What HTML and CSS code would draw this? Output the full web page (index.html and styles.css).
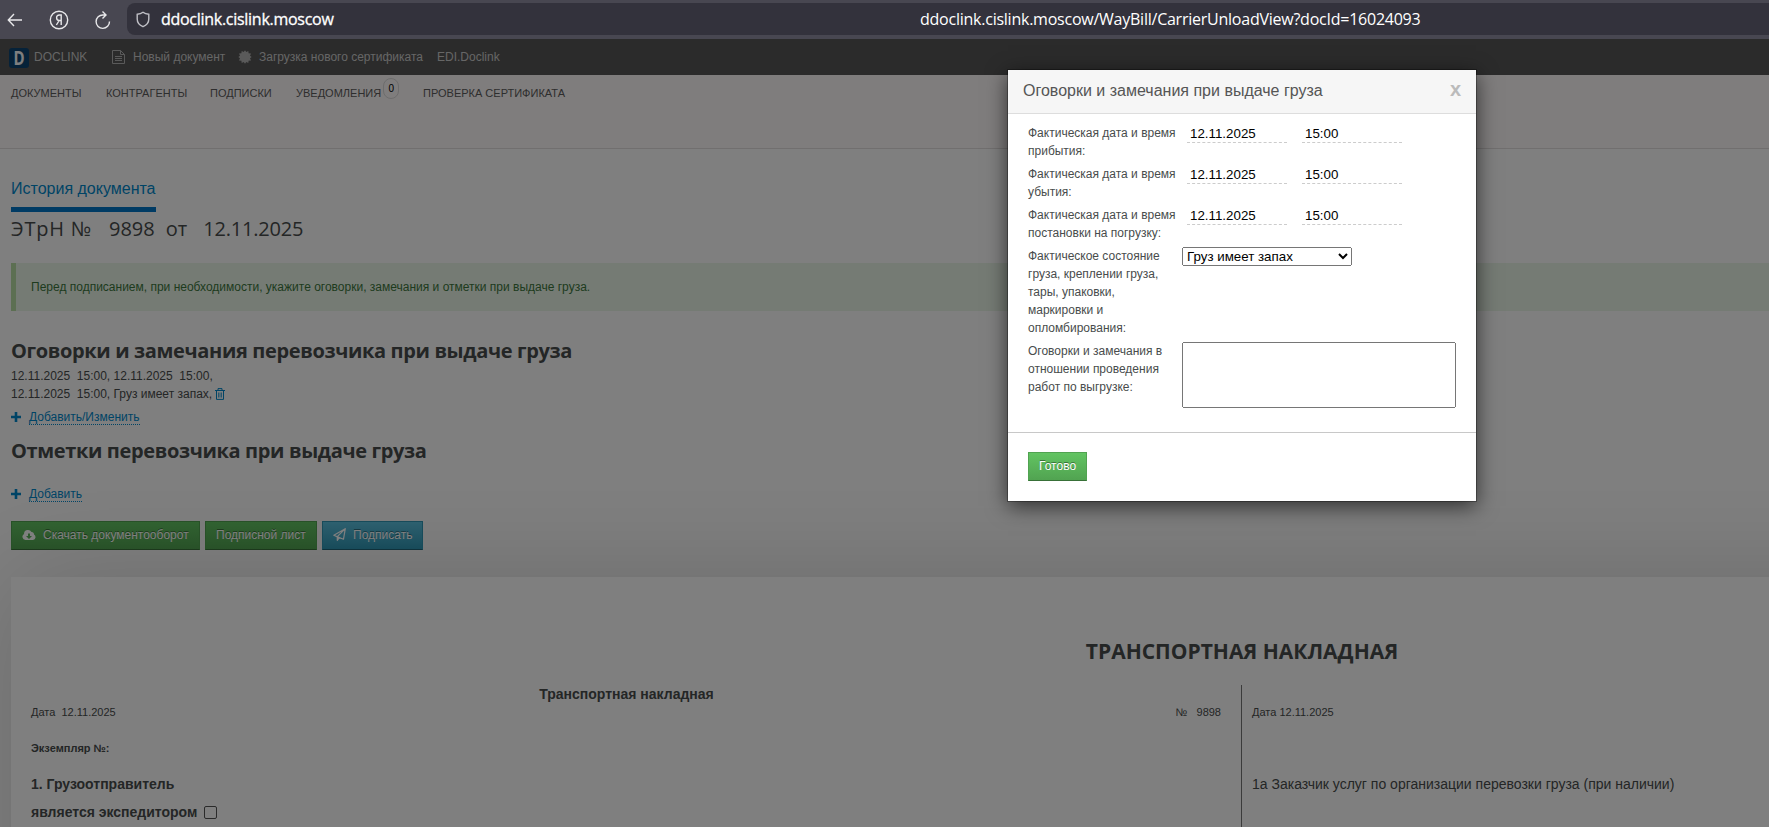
FILE: index.html
```html
<!DOCTYPE html>
<html lang="ru">

<head>
  <meta charset="UTF-8">
  <title>Doclink</title>
  <link rel="stylesheet" href="styles.css">
</head>

<body>
  <div class="browser">
    <svg class="b-icon back" width="16" height="16" viewBox="0 0 16 16"><path d="M15 8H1.5M7 2L1.3 8L7 14"/></svg>
    <svg class="b-icon ya" width="20" height="20" viewBox="0 0 20 20"><circle cx="10" cy="10" r="8.700"/><path d="M12.200 15V5H10.400C8.600 5 7.600 6.200 7.600 7.800C7.600 9.500 8.600 10.500 10.200 10.500H12.200M10.200 10.500L7.400 15"/></svg>
    <svg class="b-icon reload" width="18" height="20" viewBox="0 0 18 20"><path d="M15.500 11.500A6.700 6.700 0 1 1 9 5H11.500M8.500 1.500L12 5L8.500 8.500"/></svg>
    <div class="address">
      <svg class="b-icon shield" width="14" height="17" viewBox="0 0 14 17"><path d="M7 1.300C8.600 2.600 10.500 3.200 12.800 3.300V8C12.800 11.500 10.500 14.200 7 15.700C3.500 14.200 1.200 11.500 1.200 8V3.300C3.500 3.200 5.400 2.600 7 1.300Z"/></svg>
      <span class="host">ddoclink.cislink.moscow</span>
      <span class="url">ddoclink.cislink.moscow/WayBill/CarrierUnloadView?docId=16024093</span>
    </div>
  </div>

  <div class="app">
    <div class="topbar">
      <span class="logo"><span>D</span></span>
      <a class="brand">DOCLINK</a>
      <svg class="t-icon" width="13" height="14" viewBox="0 0 13 14"><path d="M.5.5H8.500L12.500 4.500V13.500H.5ZM8.500.5V4.500H12.500M3 6.500H10M3 8.500H10M3 10.500H10" fill="none" stroke="#b4b4b4"/></svg>
      <a class="t-new">Новый документ</a>
      <svg class="t-icon burst" width="14" height="14" viewBox="0 0 14 14"><path d="M7 .3L8.300 2L10.300 1L10.600 3.300L13 3.600L12 5.700L13.700 7L12 8.300L13 10.400L10.600 10.700L10.300 13L8.300 12L7 13.700L5.700 12L3.700 13L3.400 10.700L1 10.400L2 8.300L.3 7L2 5.700L1 3.600L3.400 3.300L3.700 1L5.700 2Z" fill="#b4b4b4"/></svg>
      <a class="t-cert">Загрузка нового сертификата</a>
      <a class="t-edi">EDI.Doclink</a>
    </div>

    <div class="nav">
      <a class="n-docs">ДОКУМЕНТЫ</a>
      <a class="n-agents">КОНТРАГЕНТЫ</a>
      <a class="n-sign">ПОДПИСКИ</a>
      <a class="n-notes">УВЕДОМЛЕНИЯ<span class="badge">0</span></a>
      <a class="n-check">ПРОВЕРКА СЕРТИФИКАТА</a>
    </div>

    <div class="content">
      <a class="history"><span>История документа</span></a>
      <div class="doc-title"><span class="type">ЭТрН №</span><span class="num">9898</span><span class="from">от</span><span class="date">12.11.2025</span></div>
      <div class="alert"><span>Перед подписанием, при необходимости, укажите оговорки, замечания и отметки при выдаче груза.</span></div>

      <h3 class="remarks-title"><span>Оговорки и замечания перевозчика при выдаче груза</span></h3>
      <div class="remarks">
        12.11.2025 &nbsp;15:00, 12.11.2025 &nbsp;15:00,<br>
        12.11.2025 &nbsp;15:00, Груз имеет запах,
        <svg class="trash" width="10" height="12" viewBox="0 0 10 12"><path d="M0 2.500H10M3 2.300V.6H7V2.300M1.500 2.500V11.400H8.500V2.500" fill="none" stroke="#08c"/><path d="M3.500 4.500V9.500M5 4.500V9.500M6.500 4.500V9.500" stroke="#08c" stroke-width=".7"/></svg>
      </div>
      <div class="add">
        <svg width="10" height="10" viewBox="0 0 10 10"><path d="M5 0V10M0 5H10" stroke="#08c" stroke-width="2.600"/></svg>
        <a class="add-edit">Добавить/Изменить</a>
      </div>

      <h3 class="marks-title"><span>Отметки перевозчика при выдаче груза</span></h3>
      <div class="add add-mark">
        <svg width="10" height="10" viewBox="0 0 10 10"><path d="M5 0V10M0 5H10" stroke="#08c" stroke-width="2.600"/></svg>
        <a>Добавить</a>
      </div>

      <div class="buttons">
        <button class="btn download">
          <svg width="14" height="12" viewBox="0 0 14 12"><path fill="#fff" fill-rule="evenodd" d="M3.500 11A3.300 3.300 0 0 1 2 4.900A4 4 0 0 1 9.500 3A2.300 2.300 0 0 1 12 5.600A2.900 2.900 0 0 1 11 11ZM6 4.500V7H4L7 10L10 7H8V4.500Z"/></svg>
          <span>Скачать документооборот</span>
        </button>
        <button class="btn sheet"><span>Подписной лист</span></button>
        <button class="btn btn-info sign">
          <svg width="13" height="13" viewBox="0 0 13 13"><path fill="none" stroke="#fff" stroke-width="1.200" stroke-linejoin="round" d="M12.300.7L.8 7.200L4 8.600L10.500 11.200ZM12.300.7L4.300 8.700V12.300L6.300 9.600"/></svg>
          <span>Подписать</span>
        </button>
      </div>

      <div class="paper">
        <h3 class="paper-title"><span>ТРАНСПОРТНАЯ НАКЛАДНАЯ</span></h3>
        <div class="sheet-grid">
          <div class="left">
            <div class="sub-title"><b>Транспортная накладная</b></div>
            <div class="line small"><span>Дата &nbsp;12.11.2025</span><span class="number">№ &nbsp; 9898</span></div>
            <div class="line small copy"><b>Экземпляр №:</b></div>
            <div class="line sender"><b>1. Грузоотправитель</b></div>
            <div class="line forwarder"><b>является экспедитором</b><span class="check"></span></div>
          </div>
          <div class="right">
            <div class="line small">Дата 12.11.2025</div>
            <div class="line customer">1а Заказчик услуг по организации перевозки груза (при наличии)</div>
          </div>
        </div>
      </div>
    </div>
    <div class="overlay"></div>
  </div>

  <div class="modal">
    <div class="modal-header"><span>Оговорки и замечания при выдаче груза</span><b class="close">x</b></div>
    <div class="modal-body">
      <div class="row">
        <label>Фактическая дата и время прибытия:</label>
        <input class="field" value="12.11.2025"><input class="field time" value="15:00">
      </div>
      <div class="row">
        <label>Фактическая дата и время убытия:</label>
        <input class="field" value="12.11.2025"><input class="field time" value="15:00">
      </div>
      <div class="row">
        <label>Фактическая дата и время постановки на погрузку:</label>
        <input class="field" value="12.11.2025"><input class="field time" value="15:00">
      </div>
      <div class="row">
        <label>Фактическое состояние груза, креплении груза, тары, упаковки, маркировки и опломбирования:</label>
        <select><option>Груз имеет запах</option></select>
      </div>
      <div class="row">
        <label>Оговорки и замечания в отношении проведения работ по выгрузке:</label>
        <textarea></textarea>
      </div>
    </div>
    <div class="modal-footer"><button class="btn">Готово</button></div>
  </div>
</body>

</html>
```
FILE: styles.css
```css
* {
  box-sizing: border-box;
}

body {
  position: relative;
  margin: 0;
  width: 1769px;
  height: 827px;
  overflow: hidden;
  font: 12px/18px "Liberation Sans", Arial, sans-serif;
  color: #484c4c;
}

svg {
  flex: none;
}

span,
a {
  white-space: nowrap;
}

/* browser bar */
.browser {
  display: flex;
  align-items: center;
  height: 39px;
  padding-left: 7px;
  background: #484751;
}

.b-icon {
  fill: none;
  stroke: #e8e8ea;
  stroke-width: 1.4;
}

.ya {
  margin-left: 26px;
}

.reload {
  margin-left: 25px;
}

.address {
  display: flex;
  align-items: center;
  flex: 1;
  height: 32px;
  margin: 0 0 1px 15px;
  padding-left: 9px;
  border-radius: 8px 0 0 8px;
  background: #33323c;
  color: #fff;
  font: 16px/32px "Open Sans", "Noto Sans", sans-serif;
}

.shield {
  stroke: #c0c0c6;
}

.host {
  width: 759px;
  margin-left: 11px;
  letter-spacing: -0.28px;
  -webkit-text-stroke: 0.3px #fff;
}

.url {
  letter-spacing: -0.24px;
}

/* application */
.app {
  position: relative;
  height: 788px;
  overflow: hidden;
  background: #fff;
}

.overlay {
  position: absolute;
  top: 0;
  right: 0;
  bottom: 0;
  left: 0;
  background: rgba(0, 0, 0, 0.5);
}

.topbar {
  display: flex;
  align-items: center;
  height: 36px;
  padding-left: 9px;
  background: #565656;
  color: #ccc;
}

.logo {
  width: 20px;
  height: 20px;
  margin-top: 2px;
  border-radius: 3px;
  background: #0d4473;
  color: #fff;
  font: bold 20px/20px "Open Sans", sans-serif;
  text-align: center;
}

.logo span {
  display: block;
  transform: scaleX(0.75);
}

.brand {
  width: 78px;
  margin-left: 5px;
}

.t-new {
  width: 105px;
  margin-left: 8px;
}

.t-cert {
  width: 178px;
  margin-left: 7px;
}

.nav {
  display: flex;
  height: 74px;
  padding: 9px 0 0 11px;
  border-bottom: 1px solid #e2dede;
  background: #fffafa;
  font-size: 11px;
  color: #5c5c5c;
}

.n-docs {
  width: 95px;
}

.n-agents {
  width: 104px;
}

.n-sign {
  width: 86px;
}

.n-notes {
  display: flex;
  align-items: flex-start;
  width: 127px;
}

.badge {
  width: 16px;
  height: 21px;
  margin: -6px 0 0 2px;
  border: 1px solid #dadada;
  border-radius: 8px;
  color: #000;
  font-size: 10px;
  line-height: 20px;
  text-align: center;
}

.content {
  padding: 30px 0 0 11px;
}

.history {
  display: inline-block;
  height: 33px;
  border-bottom: 5px solid #0077c8;
  color: #08c;
  font-size: 16px;
  line-height: 20px;
  vertical-align: top;
}

.doc-title,
h3 {
  margin: 0;
  font: 20px/28px "Open Sans", "Noto Sans", sans-serif;
}

h3 {
  font-weight: bold;
  letter-spacing: -0.36px;
}

.doc-title {
  display: flex;
  height: 34px;
  margin-top: 3px;
}

.doc-title .type {
  letter-spacing: 0.8px;
}

.doc-title .num {
  margin-left: 17px;
}

.doc-title .from {
  margin-left: 11px;
}

.doc-title .date {
  margin-left: 16px;
  letter-spacing: -0.2px;
}

.alert {
  width: 2462px;
  height: 48px;
  margin-top: 14px;
  padding: 15px;
  border-left: 5px solid #b9dfa5;
  background: #ebf7e9;
  color: #3c763d;
}

.remarks-title {
  margin-top: 26px;
}

.remarks {
  margin-top: 2px;
}

.trash {
  vertical-align: -2px;
}

.add {
  display: flex;
  align-items: center;
  gap: 8px;
  height: 18px;
  margin-top: 5px;
  color: #08c;
}

.add a {
  height: 16px;
  line-height: 16px;
  border-bottom: 1px dotted #08c;
}

.marks-title {
  margin-top: 11px;
}

.add-mark {
  margin-top: 20px;
}

.buttons {
  display: flex;
  gap: 5px;
  margin-top: 18px;
}

.btn {
  display: flex;
  align-items: center;
  gap: 7px;
  height: 29px;
  padding: 0 10px 2px;
  border: 1px solid #51a351;
  border-bottom-color: #387038;
  background: linear-gradient(#62c462, #51a351);
  color: #fff;
  font: 12px/18px "Liberation Sans", Arial, sans-serif;
  text-shadow: 0 -1px 0 rgba(0, 0, 0, 0.4);
}

.btn-info {
  border-color: #2f96b4;
  border-bottom-color: #1f6377;
  background: linear-gradient(#5bc0de, #2f96b4);
}

.download {
  width: 189px;
}

.sheet {
  width: 112px;
}

.sign {
  width: 101px;
}

/* waybill */
.paper {
  width: 2462px;
  height: 400px;
  margin-top: 27px;
  padding: 60px 20px 0;
  background: #fff;
  box-shadow: 0 0 100px rgba(0, 0, 0, 0.16);
}

.paper-title {
  font-size: 21px;
  letter-spacing: 0;
  text-align: center;
}

.sheet-grid {
  display: grid;
  grid-template-columns: 1210px 1212px;
  margin-top: 20px;
  color: #484c4c;
}

.left {
  height: 200px;
}

.right {
  padding: 18px 0 0 10px;
  border-left: 1px solid #777;
}

.sub-title {
  padding-right: 19px;
  font-size: 14px;
  text-align: center;
}

.line {
  display: flex;
  height: 18px;
  font-size: 14px;
}

.small {
  font-size: 11px;
}

.number {
  margin-left: auto;
  padding-right: 20px;
}

.copy,
.sender {
  margin-top: 18px;
}

.forwarder {
  margin-top: 10px;
}

.check {
  width: 13px;
  height: 13px;
  margin: 3px 0 0 7px;
  border: 1px solid #555;
  border-radius: 2px;
}

.customer {
  margin-top: 54px;
}

/* modal */
.modal {
  position: absolute;
  top: 70px;
  left: 1008px;
  width: 468px;
  height: 431px;
  background: #fff;
  box-shadow: 0 0 0 1px rgba(0, 0, 0, 0.3), 0 5px 20px rgba(0, 0, 0, 0.65);
}

.modal-header {
  display: flex;
  justify-content: space-between;
  height: 44px;
  padding: 0 15px;
  border-bottom: 1px solid #ddd;
  background: #f6f6f6;
  color: #555;
  font-size: 16px;
  line-height: 41px;
}

.close {
  color: #bbb;
  font-size: 20px;
  line-height: 38px;
}

.modal-body {
  height: 318px;
  padding: 10px 20px 0;
}

.row {
  display: flex;
  align-items: flex-start;
  margin-bottom: 5px;
}

.row label {
  width: 150px;
  margin-right: 4px;
}

.field {
  width: 100px;
  height: 19px;
  margin: 0 0 0 5px;
  padding: 1px 3px 0;
  border: 0;
  border-bottom: 1px dashed #ccc;
  color: #000;
  font: 13.333px "Liberation Sans", Arial, sans-serif;
}

.time {
  margin-left: 15px;
}

select {
  width: 170px;
  height: 19px;
  font: 13.333px "Liberation Sans", Arial, sans-serif;
}

textarea {
  width: 274px;
  height: 66px;
  resize: none;
}

.modal-footer {
  height: 69px;
  padding: 19px 20px;
  border-top: 1px solid #c8c8c8;
}
```
